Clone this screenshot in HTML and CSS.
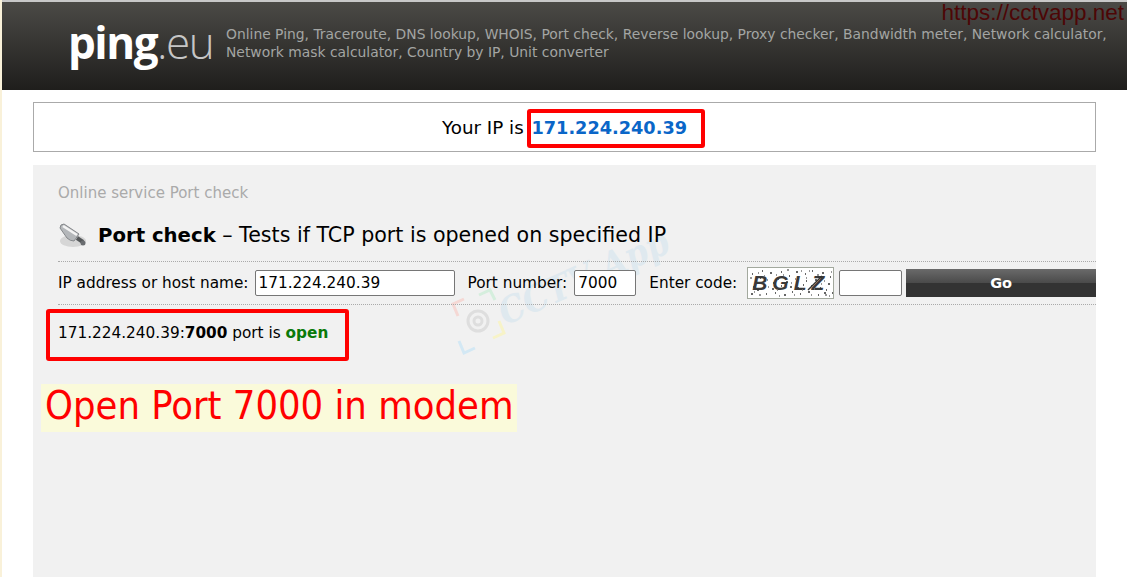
FILE: index.html
```html
<!DOCTYPE html>
<html lang="en">
<head>
  <meta charset="UTF-8">
  <title>Port check - ping.eu</title>
  <link rel="stylesheet" href="styles.css">
</head>
<body>
  <div class="page">
    <header class="header">
      <div class="logo"><b>ping</b><span class="logo-dot">.</span><span class="logo-eu">eu</span></div>
      <p class="tagline">Online Ping, Traceroute, DNS lookup, WHOIS, Port check, Reverse lookup, Proxy checker, Bandwidth meter, Network calculator, Network mask calculator, Country by IP, Unit converter</p>
    </header>
    <div class="stamp">https://cctvapp.net</div>

    <div class="ip-box">Your IP is <b class="ip">171.224.240.39</b></div>

    <main class="panel">
      <!-- watermark sits behind the form -->
      <svg class="watermark" width="60" height="80" viewBox="0 0 60 80">
        <g fill="none" stroke-width="3">
          <path d="M9 36 L4 24 L15 19" stroke="#f5d8d4"/>
          <path d="M30 15 L41 10 L46 20" stroke="#d5eedd"/>
          <path d="M50 41 L55 53 L44 58" stroke="#f7f3c8"/>
          <path d="M26 68 L15 73 L10 61" stroke="#d3e8f4"/>
          <circle cx="29" cy="41" r="10" stroke="#dedede"/>
          <circle cx="29" cy="41" r="4" stroke="#dedede"/>
        </g>
      </svg>
      <div class="watermark-text">CCTV App</div>

      <div class="crumb">Online service Port check</div>
      <h1 class="title">
        <svg class="plug" width="30" height="28" viewBox="0 0 30 28">
          <ellipse cx="15" cy="20" rx="13" ry="6" fill="#d6d6d6"/>
          <path d="M2 7 Q2 3 6 3 L21 13 L16 20 Q12 20 9 17 Z" fill="#b4b7ba" stroke="#85888b"/>
          <path d="M5 5 L19 14" stroke="#f4f4f4" stroke-width="2.5"/>
          <path d="M19 17 L25 21" stroke="#55585a" stroke-width="4"/>
          <circle cx="25" cy="22" r="2.5" fill="#6a6d70"/>
        </svg>
        <span><b class="title-name">Port check</b> – Tests if TCP port is opened on specified IP</span>
      </h1>
      <form class="check-form">
        <label>IP address or host name:</label>
        <input class="field field-ip" type="text" value="171.224.240.39">
        <label class="gap">Port number:</label>
        <input class="field field-port" type="text" value="7000">
        <label class="gap">Enter code:</label>
        <div class="captcha">
          <span class="captcha-text">BGLZ</span>
          <svg class="captcha-noise" width="85" height="30" viewBox="0 0 85 30">
            <path d="M4 6h1M9 22h2M14 3h1M7 14h1M3 26h2M18 26h1M22 5h2M27 25h1M33 4h1M36 27h2M41 8h1M44 24h1M48 4h2M52 26h1M57 6h1M60 24h2M64 3h1M70 27h1M74 5h2M78 22h1M82 9h1M80 16h2M5 19h1M12 10h1M38 14h2M55 17h1M67 12h2M72 20h1M30 11h1M84 25h1M25 15h1M49 20h2M16 17h1M24 21h2M33 18h1M42 19h2M58 13h1M63 18h1M70 9h1M76 25h2" stroke="#333" stroke-width="1.6"/>
            <path d="M2 10h2M11 27h2M16 8h1M20 19h1M31 28h1M35 7h1M43 15h1M46 27h1M58 10h1M63 27h1M69 7h2M76 13h1M83 4h1M10 5h1M28 7h1M53 3h1M66 21h1M77 27h2M6 24h1M19 12h1M29 22h1M39 2h2M47 11h1M54 22h1M61 3h1M73 16h1M81 28h1" stroke="#777" stroke-width="1.4"/>
            <path d="M60 22 L74 8" stroke="#333" stroke-width="1.5"/>
          </svg>
        </div>
        <input class="field field-code" type="text">
        <button class="go" type="button">Go</button>
      </form>
      <div class="result">171.224.240.39:<b>7000</b> port is <b class="open">open</b></div>
    </main>
  </div>

  <!-- screenshot markup on top of the page -->
  <div class="mark mark-ip"></div>
  <div class="mark mark-result"></div>
  <div class="note">Open Port 7000 in modem</div>
</body>
</html>
```

FILE: styles.css
```css
html, body {
  margin: 0;
  height: 100%;
  overflow: hidden;
}
body {
  background: #fff;
  color: #000;
  font-family: "DejaVu Sans", Verdana, sans-serif;
  font-size: 14px;
  border-left: 2px solid #f9f1d9;
  box-sizing: border-box;
  position: relative;
}
.page {
  height: 100%;
  display: flex;
  flex-direction: column;
}

/* header */
.header {
  height: 88px;
  flex: none;
  border-top: 2px solid #c8c8c8;
  background: linear-gradient(#4b4a46, #1f1e1c);
  display: flex;
  padding-left: 66px;
}
.logo {
  font-family: "Open Sans", sans-serif;
  font-size: 44px;
  line-height: 48px;
  color: #fff;
  margin-top: 16px;
  width: 158px;
  flex: none;
  letter-spacing: -1.5px;
}
.logo-dot, .logo-eu {
  font-weight: 300;
  color: #c6c6c6;
}
.tagline {
  margin: 23px 0 0;
  width: 895px;
  font-size: 13.86px;
  line-height: 18px;
  color: #a3a5a3;
}
.stamp {
  position: absolute;
  top: 0;
  right: 3px;
  font-family: "Liberation Sans", Arial, sans-serif;
  font-size: 22.5px;
  line-height: 25px;
  color: #4d0606;
}

/* your ip */
.ip-box {
  margin: 12px 31px 0;
  height: 48px;
  flex: none;
  border: 1px solid #aaa;
  font-size: 18.3px;
  line-height: 49px;
  text-align: center;
}
.ip {
  margin-left: 2px;
  color: #0a66c8;
  font-size: 17.7px;
}

/* main panel */
.panel {
  position: relative;
  margin: 13px 31px 0;
  flex: 1;
  background: #f1f1f1;
  padding: 17px 0 0 25px;
}
.crumb {
  color: #aaa;
  font-size: 15px;
  line-height: 22px;
}
.title {
  position: relative;
  z-index: 1;
  margin: 11px 0 6px;
  display: flex;
  align-items: center;
  gap: 10px;
  font-size: 20.6px;
  font-weight: normal;
  line-height: 28px;
  height: 40px;
}
.title-name {
  font-size: 19.7px;
}
.plug {
  flex: none;
}
.check-form {
  position: relative;
  z-index: 1;
  height: 42px;
  border-top: 1px dotted #aaa;
  border-bottom: 1px dotted #aaa;
  display: flex;
  align-items: center;
  font-size: 15.3px;
}
.gap {
  margin-left: 13px;
}
.field {
  box-sizing: border-box;
  height: 26px;
  border: 1px solid #767676;
  border-radius: 2px;
  background: #fff;
  font-family: inherit;
  font-size: 15.3px;
  padding: 0 3px;
  margin-left: 6px;
}
.field-ip {
  width: 200px;
}
.field-port {
  width: 62px;
  margin-left: 7px;
}
.field-code {
  width: 63px;
  margin-left: 5px;
}
.captcha {
  margin-left: 10px;
  width: 85px;
  height: 30px;
  flex: none;
  border: 1px solid #a3a99e;
  background: #fff;
  position: relative;
  overflow: hidden;
  text-align: center;
}
.captcha-noise {
  position: absolute;
  left: 0;
  top: 0;
}
.captcha-text {
  font: italic bold 21px/30px "Liberation Sans", sans-serif;
  letter-spacing: 5px;
  color: #3a3a3a;
}
.go {
  margin-left: 4px;
  flex: 1;
  height: 28px;
  border: none;
  padding: 0;
  background: linear-gradient(#6a6a6a 0, #4a4a4a 50%, #333 50%, #333 100%);
  color: #fff;
  font-family: inherit;
  font-size: 14.5px;
  font-weight: bold;
}
.result {
  margin-top: 18px;
  font-size: 15.3px;
  line-height: 20px;
}
.open {
  color: #0a7a0a;
}

/* watermark */
.watermark {
  position: absolute;
  left: 416px;
  top: 115px;
}
.watermark-text {
  position: absolute;
  left: 475px;
  top: 127px;
  font-family: "DejaVu Serif", serif;
  font-style: italic;
  font-weight: bold;
  font-stretch: condensed;
  font-size: 36px;
  line-height: 40px;
  white-space: nowrap;
  color: #dfe9ef;
  transform: rotate(-24deg);
  transform-origin: 0 100%;
}

/* annotations */
.mark {
  position: absolute;
  box-sizing: border-box;
  border: 4px solid #f00;
  border-radius: 3px;
}
.mark-ip {
  left: 525px;
  top: 109px;
  width: 178px;
  height: 39px;
}
.mark-result {
  left: 44px;
  top: 309px;
  width: 303px;
  height: 52px;
}
.note {
  position: absolute;
  left: 39px;
  top: 384px;
  height: 48px;
  padding: 0 3px 0 4px;
  background: #fafada;
  color: #f00;
  font-size: 39.5px;
  font-stretch: condensed;
  line-height: 42px;
  white-space: nowrap;
}
```
